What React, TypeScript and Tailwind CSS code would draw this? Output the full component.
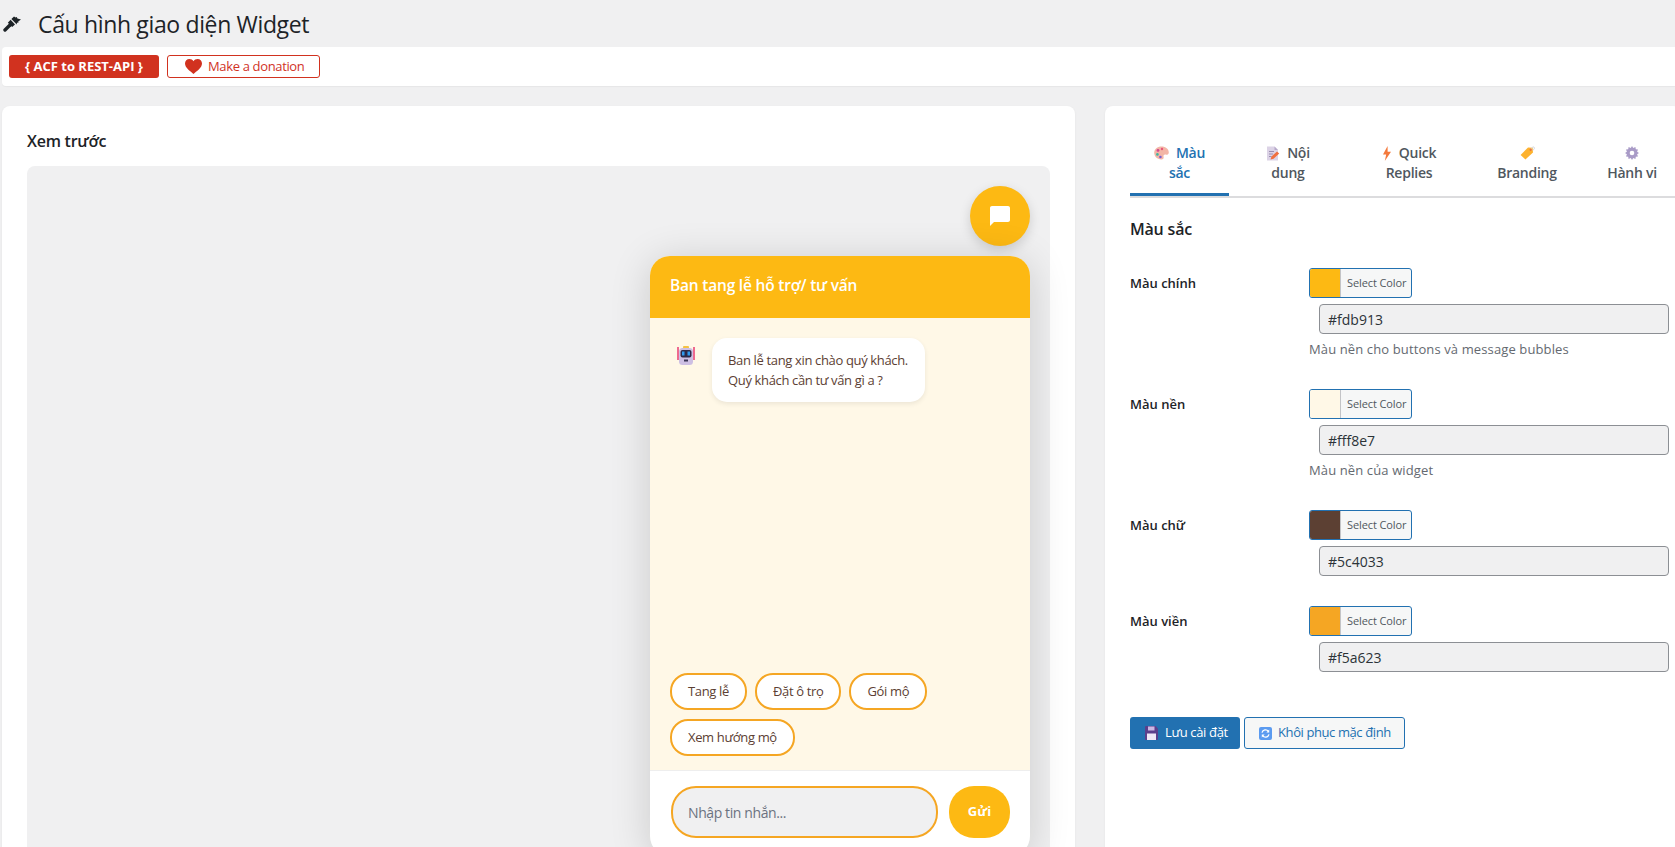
const font = "font-['Open_Sans','Liberation_Sans',sans-serif]";

function BrushIcon() {
  return (
    <svg width="18" height="16" viewBox="0 0 18 16" className="block">
      <path d="M2 14L7 9" stroke="#1d2327" strokeWidth="3.4" strokeLinecap="round" />
      <path d="M4.8 6.8L7.6 3.8 12 8.4 9.2 11Z" fill="#1d2327" />
      <path d="M8.4 3L11 0.4 12.6 1.6 13.8 1 14.4 2.4 18 3.6 15.2 5.4 15.6 6.6 14 6.8 13.6 8.4 12.8 7.6Z" fill="#1d2327" />
    </svg>
  );
}

function HeartIcon() {
  return (
    <svg width="17" height="15" viewBox="0 0 24 21" className="block">
      <path d="M12 21C8 17.6 0 12.6 0 6.4 0 2.8 2.7 0 6.2 0 8.6 0 10.8 1.2 12 3.2 13.2 1.2 15.4 0 17.8 0 21.3 0 24 2.8 24 6.4 24 12.6 16 17.6 12 21Z" fill="#d1321f" />
    </svg>
  );
}

function PaletteIcon() {
  return (
    <svg width="15" height="14" viewBox="0 0 15 14" className="block">
      <path d="M7.5 0.5C11.6 0.5 14.8 3 14.8 6.4 14.8 8.4 13.2 8.8 11.6 8.6 9.8 8.4 9.2 9.4 9.6 11 10 12.6 9 13.6 7.2 13.5 3.2 13.3 0.2 10.4 0.2 6.8 0.2 3.2 3.4 0.5 7.5 0.5Z" fill="#f3b6a6" />
      <circle cx="4" cy="4.4" r="1.4" fill="#d4478f" />
      <circle cx="8" cy="3" r="1.2" fill="#e8557a" />
      <circle cx="3.4" cy="8.4" r="1.3" fill="#3fb5a3" />
      <circle cx="6.4" cy="11" r="1.3" fill="#7a5fd0" />
    </svg>
  );
}

function MemoIcon() {
  return (
    <svg width="14" height="15" viewBox="0 0 14 15" className="block">
      <path d="M1 0.5H8.5L12 4V14.5H1Z" fill="#dcd3e6" />
      <path d="M8.5 0.5L12 4H8.5Z" fill="#b6a9c9" />
      <path d="M3 5.5H8M3 8H7M3 10.5H5.5" stroke="#9a8db0" strokeWidth="1" />
      <path d="M4.5 13.5L5.5 10.5 11 5.5 13.2 7.6 7.6 12.8Z" fill="#f0703f" />
    </svg>
  );
}

function BoltIcon() {
  return (
    <svg width="10" height="15" viewBox="0 0 10 15" className="block">
      <path d="M5.6 0L1 8.4H4.2L2.8 15 9 5.8H5.6Z" fill="#f4793b" />
    </svg>
  );
}

function TagIcon() {
  return (
    <svg width="15" height="14" viewBox="0 0 15 14" className="block">
      <path d="M0.6 9L8 1.4 12.6 1.8 13 6.4 5.4 13.6Z" fill="#fdb22e" />
      <circle cx="10.6" cy="3.8" r="1" fill="#e8573f" />
      <path d="M11 3.4C11.6 0.6 14.4 0.2 14.4 2 14.4 3.2 13.6 4 12.4 4.2" fill="none" stroke="#c9cdd6" strokeWidth="0.8" />
    </svg>
  );
}

function GearIcon() {
  return (
    <svg width="14" height="14" viewBox="0 0 14 14" className="block">
      <path d="M7 0L8.2 2 10.4 1.1 10.8 3.3 13 3.6 12.1 5.8 14 7 12.1 8.2 13 10.4 10.8 10.7 10.4 12.9 8.2 12 7 14 5.8 12 3.6 12.9 3.2 10.7 1 10.4 1.9 8.2 0 7 1.9 5.8 1 3.6 3.2 3.3 3.6 1.1 5.8 2Z" fill="#a99bc7" />
      <circle cx="7" cy="7" r="2.3" fill="#fff" />
    </svg>
  );
}

function ChatIcon() {
  return (
    <svg width="24" height="24" viewBox="0 0 24 24" className="block">
      <path d="M20 2H4c-1.1 0-2 .9-2 2v18l4-4h14c1.1 0 2-.9 2-2V4c0-1.1-.9-2-2-2z" fill="#fff" />
    </svg>
  );
}

function RobotIcon() {
  return (
    <svg width="20" height="20" viewBox="0 0 20 20" className="block shrink-0">
      <rect x="0" y="1" width="2" height="13" fill="#ee6a8f" />
      <rect x="16" y="1" width="2" height="13" fill="#ee6a8f" />
      <rect x="6" y="0" width="6" height="2.5" rx="1" fill="#f5c242" />
      <rect x="2" y="2" width="14" height="17" rx="3.5" fill="#cdbfe3" />
      <rect x="3.5" y="4" width="11" height="7.5" rx="2" fill="#2c2a4a" />
      <rect x="5" y="5.5" width="2.5" height="4" fill="#2f9bf0" />
      <rect x="10.5" y="5.5" width="2.5" height="4" fill="#2f9bf0" />
      <rect x="7" y="13.5" width="4" height="2" fill="#3a3555" />
    </svg>
  );
}

function FloppyIcon() {
  return (
    <svg width="13" height="14" viewBox="0 0 13 14" className="block">
      <path d="M0 1a1 1 0 0 1 1-1h9.5L13 2.5V13a1 1 0 0 1-1 1H1a1 1 0 0 1-1-1Z" fill="#5b3f8c" />
      <rect x="3" y="0.5" width="6.5" height="4" fill="#c9b8e4" />
      <rect x="2" y="7.5" width="9" height="6.5" fill="#efe8f7" />
    </svg>
  );
}

function ResetIcon() {
  return (
    <svg width="13" height="13" viewBox="0 0 13 13" className="block">
      <rect width="13" height="13" rx="2" fill="#5b9bf0" />
      <path d="M3 5.6A3.6 3.6 0 0 1 9.4 4.4M10 7.4A3.6 3.6 0 0 1 3.6 8.6" fill="none" stroke="#fff" strokeWidth="1.3" />
      <path d="M10.2 2.4V5.4H7.4ZM2.8 10.6V7.6H5.6Z" fill="#fff" />
    </svg>
  );
}

const tabs = [
  { id: "colors", width: "w-[99px]", icon: <PaletteIcon />, first: "Màu", second: "sắc", active: true },
  { id: "content", width: "w-[118px]", icon: <MemoIcon />, first: "Nội", second: "dung", active: false },
  { id: "quick", width: "w-[124px]", icon: <BoltIcon />, first: "Quick", second: "Replies", active: false },
  { id: "brand", width: "w-[112px]", icon: <TagIcon />, first: "", second: "Branding", active: false },
  { id: "behavior", width: "w-[98px]", icon: <GearIcon />, first: "", second: "Hành vi", active: false },
];

const colorRows = [
  { label: "Màu chính", swatch: "bg-[#fdb913]", value: "#fdb913", desc: "Màu nền cho buttons và message bubbles" },
  { label: "Màu nền", swatch: "bg-[#fff8e7]", value: "#fff8e7", desc: "Màu nền của widget" },
  { label: "Màu chữ", swatch: "bg-[#5c4033]", value: "#5c4033", desc: "" },
  { label: "Màu viền", swatch: "bg-[#f5a623]", value: "#f5a623", desc: "" },
];

function ChatPreview() {
  return (
    <div className="mt-[10px] flex h-[600px] w-[380px] shrink-0 flex-col overflow-hidden rounded-[20px] bg-white shadow-[0_5px_40px_rgba(0,0,0,0.16)]">
      <div className="flex h-[62px] shrink-0 items-center bg-[#fdb913] px-[20px] pb-[2px] text-[15.5px] font-semibold tracking-[-0.2px] text-white">
        Ban tang lễ hỗ trợ/ tư vấn
      </div>
      <div className="flex flex-1 flex-col justify-between bg-[#fff8e7] px-[20px] pt-[20px] pb-[14px]">
        <div className="flex gap-[15px] pl-[7px]">
          <div className="pt-[8px]">
            <RobotIcon />
          </div>
          <div className="h-[64px] w-[213px] rounded-[15px] bg-white px-[16px] py-[12px] text-[13px] leading-[20px] tracking-[-0.35px] whitespace-nowrap text-[#5c4033] shadow-[0_2px_5px_rgba(0,0,0,0.08)]">
            Ban lễ tang xin chào quý khách.
            <br />
            Quý khách cần tư vấn gì a ?
          </div>
        </div>
        <div className="flex flex-wrap gap-x-[8px] gap-y-[9px]">
          {["Tang lễ", "Đặt ô trọ", "Gói mộ", "Xem hướng mộ"].map((q) => (
            <button
              key={q}
              className="h-[37px] rounded-[18px] border-2 border-[#f5a623] bg-white px-[16px] text-[13px] tracking-[-0.35px] text-[#5c4033]"
            >
              {q}
            </button>
          ))}
        </div>
      </div>
      <div className="flex h-[86px] shrink-0 gap-[11px] border-t border-[#eeeeee] pt-[15px] pr-[20px] pl-[21px]">
        <input
          placeholder="Nhập tin nhắn..."
          className="h-[52px] w-[267px] rounded-[25px] border-2 border-[#f5a623] bg-[#f0f0f1] px-[15px] text-[14px] tracking-[-0.4px] outline-none placeholder:text-[#6b7280]"
        />
        <button className="h-[52px] w-[61px] rounded-[25px] bg-[#fdb913] text-[13px] font-bold text-white">Gửi</button>
      </div>
    </div>
  );
}

function ColorRow({ label, swatch, value, desc }: { label: string; swatch: string; value: string; desc: string }) {
  return (
    <div className="flex">
      <div className="w-[179px] pt-[5px] text-[13px] leading-[20px] font-semibold text-[#1d2327]">{label}</div>
      <div className="flex flex-col">
        <button className="flex h-[30px] w-[103px] overflow-hidden rounded-[3px] border border-[#2271b1] bg-[#f6f7f7] text-left">
          <span className={"h-full w-[31px] border-r border-[#c3c4c7] " + swatch} />
          <span className="pl-[6px] text-[11px] leading-[28px] tracking-[-0.1px] whitespace-nowrap text-[#50575e]">Select Color</span>
        </button>
        <input
          readOnly
          value={value}
          className="mt-[6px] ml-[10px] h-[30px] w-[350px] rounded-[4px] border border-[#8c8f94] bg-[#f0f0f1] px-[8px] text-[14px] text-[#2c3338] outline-none"
        />
        {desc && <p className="mt-[5px] text-[13px] leading-[20px] tracking-[0.12px] text-[#646970]">{desc}</p>}
      </div>
    </div>
  );
}

export default function App() {
  return (
    <div className={"flex h-[847px] w-[1675px] flex-col overflow-hidden bg-[#f0f0f1] " + font}>
      <div className="flex h-[47px] shrink-0 items-center pl-[3px]">
        <BrushIcon />
        <h1 className="ml-[17px] text-[23px] leading-[30px] tracking-[-0.35px] text-[#1d2327]">Cấu hình giao diện Widget</h1>
      </div>

      <div className="ml-[2px] flex h-[39px] shrink-0 items-center gap-[8px] rounded-l-[4px] bg-white pl-[7px] shadow-[0_1px_1px_rgba(0,0,0,0.04)]">
        <a className="flex h-[23px] w-[150px] items-center justify-center rounded-[3px] bg-[#d1321f] pt-[1px] text-[13px] font-bold text-white">
          {"{ ACF to REST-API }"}
        </a>
        <a className="flex h-[23px] w-[153px] items-center gap-[6px] rounded-[3px] border border-[#d1321f] pl-[17px] text-[13px] tracking-[-0.35px] text-[#d1321f]">
          <HeartIcon />
          Make a donation
        </a>
      </div>

      <div className="mt-[20px] ml-[2px] flex min-h-0 flex-1 gap-[30px]">
        <section className="flex w-[1073px] shrink-0 flex-col rounded-t-[8px] bg-white px-[25px] pt-[23px] shadow-[0_1px_3px_rgba(0,0,0,0.05)]">
          <h2 className="mb-[13px] text-[16px] leading-[24px] font-semibold tracking-[-0.25px] text-[#1d2327]">Xem trước</h2>
          <div className="flex flex-1 flex-col items-end rounded-t-[8px] bg-[#f0f0f1] pt-[20px] pr-[20px]">
            <div className="flex h-[60px] w-[60px] shrink-0 items-center justify-center rounded-full bg-[#fdb913] shadow-[0_4px_12px_rgba(0,0,0,0.15)]">
              <ChatIcon />
            </div>
            <ChatPreview />
          </div>
        </section>

        <section className="flex-1 rounded-t-[8px] bg-white pt-[25px] pl-[25px] shadow-[0_1px_3px_rgba(0,0,0,0.05)]">
          <div className="flex overflow-hidden border-b-2 border-[#dcdcde]">
            {tabs.map((t) => (
              <div
                key={t.id}
                className={
                  "flex h-[65px] shrink-0 flex-col items-center border-b-[3px] pt-[12px] text-[14px] leading-[20px] font-semibold tracking-[-0.25px] " +
                  t.width +
                  (t.active ? " border-[#2271b1] text-[#2271b1]" : " border-transparent text-[#50575e]")
                }
              >
                <span className="flex h-[20px] items-center gap-[7px]">
                  {t.icon}
                  {t.first}
                </span>
                <span>{t.second}</span>
              </div>
            ))}
          </div>

          <h2 className="mt-[19px] mb-[27px] text-[16px] leading-[24px] font-semibold tracking-[-0.2px] text-[#1d2327]">Màu sắc</h2>

          <div className="flex flex-col gap-[30px]">
            {colorRows.map((r) => (
              <ColorRow key={r.label} {...r} />
            ))}
          </div>

          <div className="mt-[45px] flex gap-[4px]">
            <button className="flex h-[32px] w-[110px] items-center gap-[7px] rounded-[3px] bg-[#2271b1] pl-[15px] text-[13px] tracking-[-0.35px] text-white">
              <FloppyIcon />
              Lưu cài đặt
            </button>
            <button className="flex h-[32px] w-[161px] items-center gap-[6px] rounded-[3px] border border-[#2271b1] bg-[#f6f7f7] pl-[14px] text-[13px] tracking-[-0.4px] text-[#2271b1]">
              <ResetIcon />
              Khôi phục mặc định
            </button>
          </div>
        </section>
      </div>
    </div>
  );
}
